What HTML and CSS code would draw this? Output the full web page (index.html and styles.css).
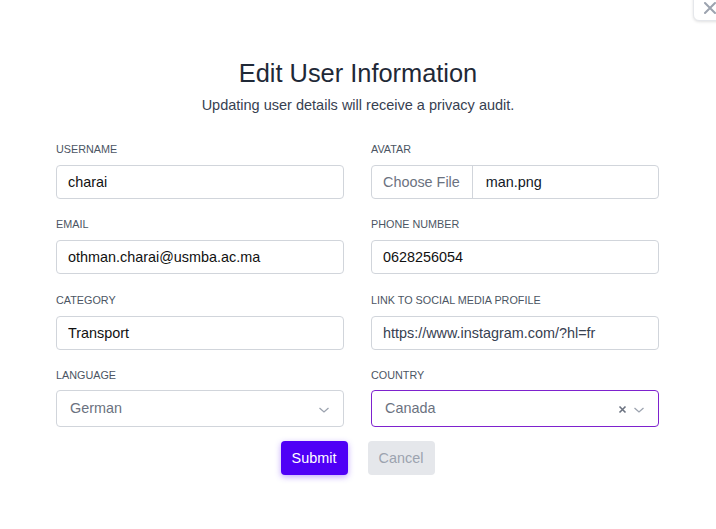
FILE: index.html
```html
<!DOCTYPE html>
<html lang="en">
<head>
<meta charset="utf-8">
<title>Edit User Information</title>
<link rel="stylesheet" href="styles.css">
</head>
<body>
<div class="modal">
  <button class="close" aria-label="Close">
    <svg width="14" height="14" viewBox="0 0 14 14"><path d="M2 2 L12 12 M12 2 L2 12" stroke="#9ca3af" stroke-width="2" stroke-linecap="round"/></svg>
  </button>
  <h2 class="title">Edit User Information</h2>
  <p class="subtitle">Updating user details will receive a privacy audit.</p>
  <form class="form">
    <div class="field">
      <label class="label">Username</label>
      <input class="input" type="text" value="charai">
    </div>
    <div class="field">
      <label class="label">Avatar</label>
      <div class="input file">
        <span class="file-btn">Choose File</span>
        <span class="file-name">man.png</span>
      </div>
    </div>
    <div class="field">
      <label class="label">Email</label>
      <input class="input" type="text" value="othman.charai@usmba.ac.ma">
    </div>
    <div class="field">
      <label class="label">Phone number</label>
      <input class="input" type="text" value="0628256054">
    </div>
    <div class="field">
      <label class="label">Category</label>
      <input class="input" type="text" value="Transport">
    </div>
    <div class="field">
      <label class="label">Link to social media profile</label>
      <input class="input soft" type="text" value="https://www.instagram.com/?hl=fr">
    </div>
    <div class="field">
      <label class="label">Language</label>
      <div class="select">
        <span class="select-value">German</span>
        <span class="select-icons">
          <svg class="chev" width="12" height="8" viewBox="0 0 12 8"><path d="M1.5 2 L6 6 L10.5 2" fill="none" stroke="#9ca3af" stroke-width="1.3"/></svg>
        </span>
      </div>
    </div>
    <div class="field">
      <label class="label">Country</label>
      <div class="select focused">
        <span class="select-value">Canada</span>
        <span class="select-icons">
          <svg class="clear" width="9" height="9" viewBox="0 0 9 9"><path d="M1.5 1.5 L7.5 7.5 M7.5 1.5 L1.5 7.5" stroke="#6b7280" stroke-width="1.6"/></svg>
          <svg class="chev" width="12" height="8" viewBox="0 0 12 8"><path d="M1.5 2 L6 6 L10.5 2" fill="none" stroke="#9ca3af" stroke-width="1.3"/></svg>
        </span>
      </div>
    </div>
    <div class="actions">
      <button type="button" class="btn primary">Submit</button>
      <button type="button" class="btn secondary">Cancel</button>
    </div>
  </form>
</div>
</body>
</html>
```

FILE: styles.css
```css
* { box-sizing: border-box; }
html, body { margin: 0; padding: 0; background: #ffffff; }
body {
  font-family: "Liberation Sans", Arial, sans-serif;
  color: #111827;
  width: 716px;
  height: 529px;
  overflow: hidden;
}
.modal {
  position: relative;
  padding-top: 59px;
  width: 716px;
  height: 529px;
}
.close {
  position: absolute;
  top: -10px;
  left: 693px;
  width: 36px;
  height: 31px;
  background: #fff;
  border: 1px solid #e5e7eb;
  border-radius: 6px;
  box-shadow: 0 1px 3px rgba(0,0,0,0.12);
  padding: 10px 0 0 9px;
  display: flex;
  align-items: flex-start;
  justify-content: flex-start;
  cursor: pointer;
}
.title {
  margin: 0;
  font-size: 25.4px;
  line-height: 28px;
  font-weight: 400;
  color: #1f2937;
  text-align: center;
}
.subtitle {
  margin: 9px 0 0;
  font-size: 14.5px;
  line-height: 18px;
  color: #374151;
  text-align: center;
}
.form {
  margin: 28px 0 0 56px;
  width: 603px;
  display: grid;
  grid-template-columns: 288px 288px;
  column-gap: 27px;
  row-gap: 18.4px;
}
.field { display: flex; flex-direction: column; }
.label {
  font-size: 10.8px;
  line-height: 14px;
  text-transform: uppercase;
  color: #4b5563;
  margin-bottom: 9px;
}
.input {
  height: 34px;
  border: 1px solid #d1d5db;
  border-radius: 4px;
  padding: 0 11px;
  font-family: "Liberation Sans", Arial, sans-serif;
  font-size: 14.4px;
  color: #111111;
  background: #fff;
  outline: none;
  width: 100%;
}
.input.soft { color: #374151; }
.file {
  display: flex;
  align-items: stretch;
  padding: 0;
  overflow: hidden;
}
.file-btn {
  display: flex;
  align-items: center;
  padding: 0 12px 0 11px;
  color: #6b7280;
  border-right: 1px solid #d1d5db;
}
.file-name {
  display: flex;
  align-items: center;
  padding-left: 13px;
  color: #111827;
}
.select {
  height: 37px;
  margin-top: -1px;
  border: 1px solid #d1d5db;
  border-radius: 4px;
  display: flex;
  align-items: center;
  justify-content: space-between;
  padding: 0 13px 0 13px;
  font-size: 14.4px;
  color: #6b7280;
  background: #fff;
}
.select.focused {
  border-color: #7e22ce;
}
.select-value { line-height: 18px; margin-top: -2px; }
.select-icons {
  display: flex;
  align-items: center;
  gap: 6px;
  margin-top: 2px;
}
.actions {
  grid-column: 1 / span 2;
  display: flex;
  justify-content: center;
  gap: 20px;
  margin-top: -5px;
  padding-left: 0;
}
.btn {
  height: 34px;
  width: 67px;
  border: none;
  border-radius: 4px;
  font-family: "Liberation Sans", Arial, sans-serif;
  font-size: 14.4px;
  cursor: pointer;
}
.primary {
  background: #4f00f6;
  color: #ffffff;
  box-shadow: 0 2px 6px rgba(79,0,246,0.35);
}
.secondary {
  background: #e5e7eb;
  color: #9ca3af;
}
```
